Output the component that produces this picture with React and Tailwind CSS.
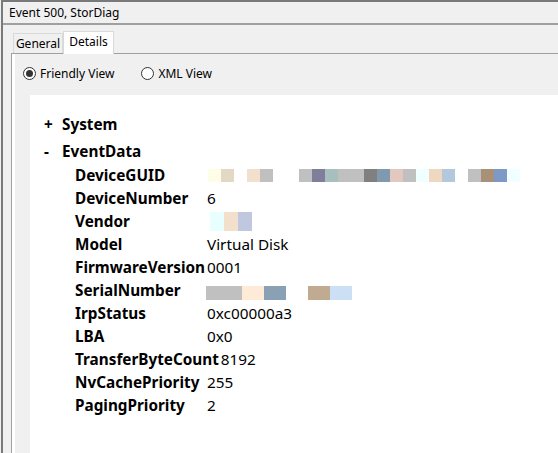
import React from 'react';

const guidCells = [
  '#fefee8', '#e3d8c3', null, '#f2e0cc', '#c0c0c0', null, null, '#c0c0c0',
  '#7f7f99', '#a8bfbf', '#c0c0c0', '#c0c0c0', '#808080', '#8099ad', '#e3c8bf',
  '#c0c0c0', '#f0ffff', '#efd8bf', '#b3c8dd', null, '#c0c0c0', '#a89079',
  '#7f99c6', '#f0ffff',
];

function Blur({ cells, w, h }) {
  return (
    <div className="flex">
      {cells.map((c, i) => (
        <div key={i} style={{ width: w, height: h, background: c || 'transparent' }} />
      ))}
    </div>
  );
}

function Radio({ checked, label }) {
  return (
    <label className="flex items-center gap-[4px]">
      <span className="w-[13px] h-[13px] rounded-full border border-[#333] bg-white flex items-center justify-center">
        {checked && <span className="w-[7px] h-[7px] rounded-full bg-[#333]" />}
      </span>
      <span className="text-[12px] text-black">{label}</span>
    </label>
  );
}

const rows = [
  ['DeviceGUID', <div className="ml-[1px]"><Blur cells={guidCells} w={13} h={13} /></div>],
  ['DeviceNumber', '6'],
  ['Vendor', <div className="ml-[3px]"><Blur cells={['#e8ffff', '#f2e0cc', '#c0c8e0']} w={14} h={19} /></div>],
  ['Model', 'Virtual Disk'],
  ['FirmwareVersion', '0001'],
  ['SerialNumber', (
    <div className="flex mt-[4px] -ml-[1px]">
      <div className="w-[36px] h-[14px] bg-[#c0c0c0]" />
      <div className="w-[22px] h-[14px] bg-[#fdebd8]" />
      <div className="w-[22px] h-[14px] bg-[#8aa0b5]" />
      <div className="w-[22px] h-[14px]" />
      <div className="w-[22px] h-[14px] bg-[#c0aa90]" />
      <div className="w-[22px] h-[14px] bg-[#cce0f5]" />
    </div>
  )],
  ['IrpStatus', '0xc00000a3'],
  ['LBA', '0x0'],
  ['TransferByteCount', '8192'],
  ['NvCachePriority', '255'],
  ['PagingPriority', '2'],
];

export default function App() {
  return (
    <div className="w-[558px] h-[453px] overflow-hidden bg-[#f0f0f0] pl-px font-['Segoe_UI','Noto_Sans',sans-serif] text-black">
      <div className="h-full border-l-2 border-t-2 border-[#7a7a7a] flex flex-col">
        <div className="h-[21px] pl-[6px] flex items-center text-[12px]">Event 500, StorDiag</div>
        <div className="h-[2px] bg-[#a0a0a0]" />

        <div className="flex-1 pl-[8px] pt-[6px] flex flex-col">
          <div className="h-[22px] flex items-end pl-[2px] relative z-10">
            <div className="h-[20px] w-[50px] border border-b-0 border-[#d9d9d9] bg-[#f0f0f0] flex items-center justify-center text-[12px]">
              General
            </div>
            <div className="h-[23px] w-[51px] -mb-px border border-b-0 border-[#d9d9d9] bg-white flex items-center justify-center text-[12px] pb-[2px]">
              Details
            </div>
          </div>

          <div className="flex-1 flex border-l border-t border-[#a0a0a0]">
            <div className="w-[3px] bg-white" />
            <div className="flex-1 flex flex-col">
              <div className="h-[41px] flex items-center gap-[27px] pl-[8px] pb-[2px]">
                <Radio checked label="Friendly View" />
                <Radio label="XML View" />
              </div>

              <div className="flex-1 bg-white ml-[15px] pl-[14px] pt-[18px] text-[15.3px]">
                <div className="h-[23px] flex items-center font-bold">
                  <span className="w-[18px]">+</span>
                  <span>System</span>
                </div>
                <div className="h-[23px] mt-[4px] flex items-center font-bold">
                  <span className="w-[18px]">-</span>
                  <span>EventData</span>
                </div>
                <div className="mt-[1px] pl-[31px]">
                  {rows.map(([k, v]) => (
                    <div key={k} className="h-[23px] flex items-center">
                      <span className="min-w-[132px] pr-[2px] font-bold whitespace-nowrap">{k}</span>
                      {typeof v === 'string' ? <span>{v}</span> : v}
                    </div>
                  ))}
                </div>
              </div>
            </div>
          </div>
        </div>
      </div>
    </div>
  );
}
